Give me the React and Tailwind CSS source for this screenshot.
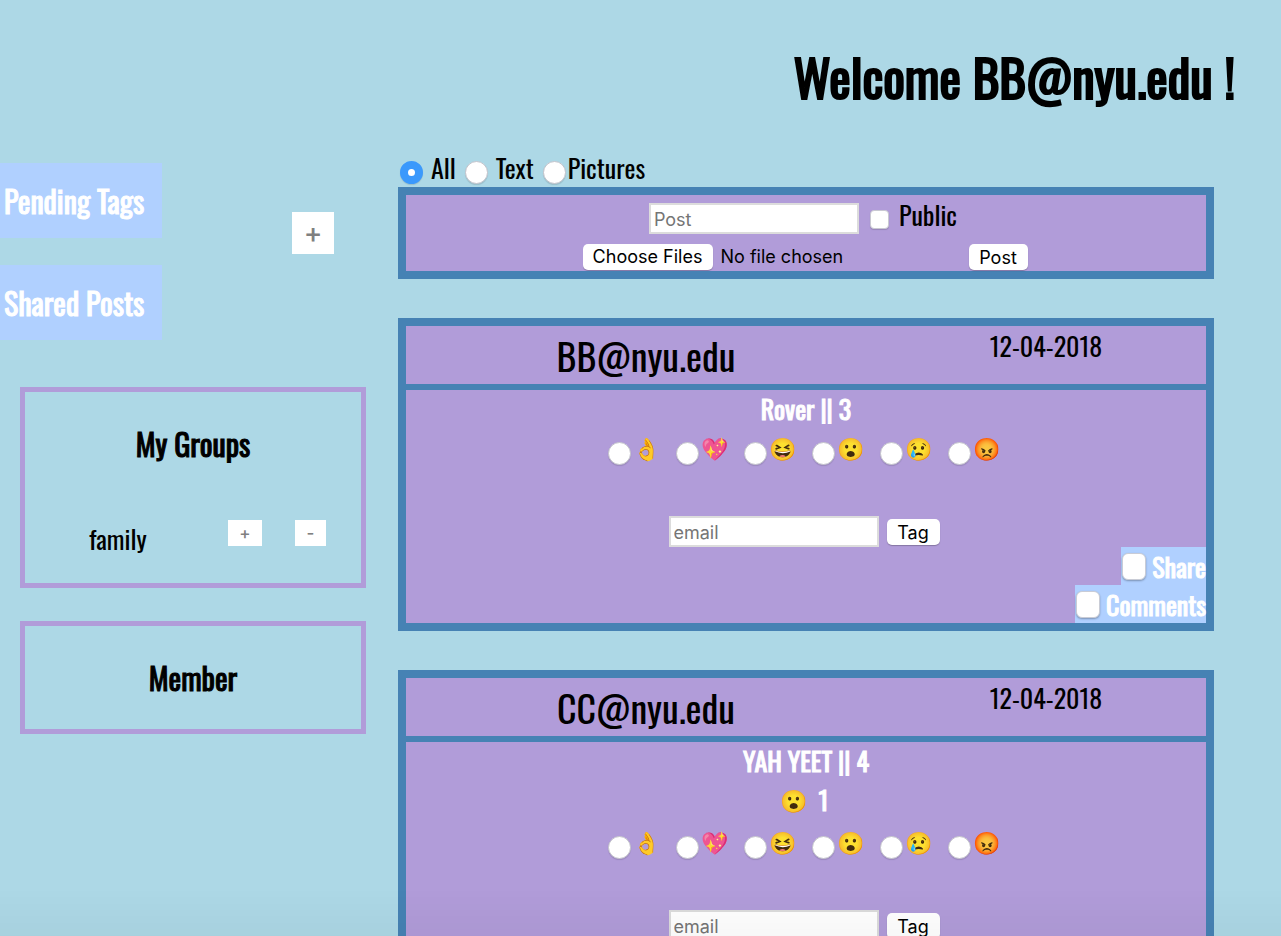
const REACTIONS = [
  ["ok", "👌"],
  ["love", "💖"],
  ["laugh", "😆"],
  ["wow", "😮"],
  ["sad", "😢"],
  ["angry", "😡"],
];

const POSTS = [
  { id: 3, author: "BB@nyu.edu", date: "12-04-2018", text: "Rover", counts: [] },
  { id: 4, author: "CC@nyu.edu", date: "12-04-2018", text: "YAH YEET", counts: [["😮", 1]] },
];

const FILTERS = [
  ["All", "gap-2"],
  ["Text", "gap-2"],
  ["Pictures", "gap-[2px]"],
];

function Radio({ className = "", ...props }) {
  return (
    <input
      type="radio"
      className={`size-[23px] shrink-0 appearance-none rounded-full border border-[#c4c4cc] bg-white shadow-[0_1px_1px_rgba(0,0,0,0.12)] checked:border-[8px] checked:border-[#3b99fc] ${className}`}
      {...props}
    />
  );
}

function TextBox(props) {
  return (
    <input
      type="text"
      className="h-[31px] w-[210px] border-2 border-[#dcdcdc] bg-white px-[3px] pt-[2px] font-['Inter',sans-serif] text-[18px] text-black placeholder:text-[#757575]"
      {...props}
    />
  );
}

function MacButton({ children, className = "", ...props }) {
  return (
    <button
      type="button"
      className={`h-[26px] rounded-[5px] bg-white font-['Inter',sans-serif] text-[18px] leading-[28px] text-black shadow-[0_1px_1px_rgba(0,0,0,0.25)] ${className}`}
      {...props}
    >
      {children}
    </button>
  );
}

function Toggle({ label }) {
  return (
    <label className="flex h-[38px] items-center gap-[6px] bg-[#b0d0ff] pl-px text-[26px] text-white [-webkit-text-stroke:1px]">
      <input
        type="checkbox"
        className="h-[27px] w-6 appearance-none rounded-[6px] border border-[#c9ccd6] bg-white shadow-[0_1px_2px_rgba(0,0,0,0.3)] checked:bg-[#3b99fc]"
      />
      {label}
    </label>
  );
}

function Post({ post }) {
  return (
    <article className="border-8 border-[#4682b4] bg-[#b19cd9]">
      <header className="flex h-16 border-b-[6px] border-[#4682b4]">
        <h2 className="w-3/5 pt-1 text-center text-[38px] leading-[50px]">{post.author}</h2>
        <p className="w-2/5 text-center text-[26px] leading-10">{post.date}</p>
      </header>
      <p className="text-center text-[26px] leading-[38px] text-white [-webkit-text-stroke:1px]">
        {post.text} || {post.id}
      </p>
      {post.counts.map(([emoji, count]) => (
        <p
          key={emoji}
          className="flex h-[42px] items-center justify-center gap-3 pr-1 pb-1 text-[26px] text-white [-webkit-text-stroke:1px]"
        >
          <span className="text-[22px] [-webkit-text-stroke:0]">{emoji}</span>
          {count}
        </p>
      ))}
      <form className="flex flex-col items-center" onSubmit={(e) => e.preventDefault()}>
        <fieldset className="flex h-10 items-center justify-center pr-1">
          {REACTIONS.map(([name, emoji]) => (
            <label key={name} className="flex w-[68px] items-center justify-center gap-[2px]">
              <Radio name={`reaction-${post.id}`} value={name} className="mt-[14px]" />
              <span className="flex w-7 justify-center text-[22px] leading-none">{emoji}</span>
            </label>
          ))}
        </fieldset>
        <div className="mt-12 flex items-center gap-2 pr-1">
          <TextBox placeholder="email" aria-label={`Email to tag on post ${post.id}`} />
          <MacButton className="w-[53px]">Tag</MacButton>
        </div>
      </form>
      <div className="flex flex-col items-end">
        <Toggle label="Share" />
        <Toggle label="Comments" />
      </div>
    </article>
  );
}

function SideLink({ children }) {
  return (
    <a
      href="#"
      className="flex h-[75px] items-center bg-[#b0d0ff] pr-[18px] pl-1 text-[30px] text-white [-webkit-text-stroke:1px]"
    >
      {children}
    </a>
  );
}

function SmallButton({ children, className = "", ...props }) {
  return (
    <button
      type="button"
      className={`h-[26px] bg-white font-['Inter',sans-serif] text-[17px] leading-[26px] font-medium text-[#808080] ${className}`}
      {...props}
    >
      {children}
    </button>
  );
}

function Panel({ title, className = "", children }) {
  return (
    <section className={`ml-5 border-[5px] border-[#b19cd9] pt-[30px] ${className}`}>
      <h2 className="text-center text-[30px] leading-[44px] [-webkit-text-stroke:1px]">{title}</h2>
      {children}
    </section>
  );
}

function Sidebar() {
  return (
    <aside className="w-[398px] shrink-0 pt-[13px] pr-8">
      <div className="flex items-start justify-between">
        <nav className="flex flex-col items-start gap-[27px]">
          <SideLink>Pending Tags</SideLink>
          <SideLink>Shared Posts</SideLink>
        </nav>
        <button
          type="button"
          aria-label="Add group"
          className="mt-[49px] mr-8 size-[42px] bg-white font-['Inter',sans-serif] text-[28px] leading-[42px] font-medium text-[#808080]"
        >
          +
        </button>
      </div>
      <Panel title="My Groups" className="mt-[47px] pb-[39px]">
        <div className="mt-[54px] flex h-6 items-start pr-[35px] pl-16">
          <span className="text-[26px] leading-[38px]">family</span>
          <SmallButton className="ml-auto w-[34px]" aria-label="Add member to family">
            +
          </SmallButton>
          <SmallButton className="ml-[33px] w-[31px]" aria-label="Remove member from family">
            -
          </SmallButton>
        </div>
      </Panel>
      <Panel title="Member" className="mt-[33px] pb-[29px]" />
    </aside>
  );
}

export default function App() {
  return (
    <div className="h-screen overflow-y-auto bg-[#add8e6] font-['Oswald',sans-serif] text-black [scrollbar-width:none]">
      <header className="flex h-[150px] items-center justify-end pt-[2px] pr-[46px]">
        <h1 className="text-[51px] [-webkit-text-stroke:2px]">Welcome BB@nyu.edu !</h1>
      </header>
      <div className="flex items-start">
        <Sidebar />
        <main className="min-w-0 flex-1 pr-[67px] pb-10">
          <div className="flex h-[34px] items-center gap-[9px] pl-[2px] text-[26px]">
            {FILTERS.map(([label, spacing], i) => (
              <label key={label} className={`flex items-center ${spacing}`}>
                <Radio name="filter" defaultChecked={i === 0} className="mt-[10px]" />
                {label}
              </label>
            ))}
          </div>
          <form
            className="mt-[3px] border-8 border-[#4682b4] bg-[#b19cd9]"
            onSubmit={(e) => e.preventDefault()}
          >
            <div className="flex h-[43px] items-center justify-center pt-1 pr-[6px]">
              <TextBox placeholder="Post" aria-label="Post text" />
              <label className="ml-[11px] flex items-center gap-[10px] pb-[9px] text-[26px]">
                <input
                  type="checkbox"
                  className="mt-[10px] size-[19px] appearance-none rounded border border-[#c9c9d2] bg-white shadow-[0_1px_1px_rgba(0,0,0,0.15)] checked:bg-[#3b99fc]"
                />
                Public
              </label>
            </div>
            <div className="flex items-start justify-center pt-[6px] pr-[2px]">
              <input
                type="file"
                multiple
                aria-label="Attach files"
                className="h-[27px] w-[386px] font-['Inter',sans-serif] text-[18px] leading-[26px] file:mr-2 file:h-[26px] file:w-[130px] file:rounded-[5px] file:bg-white file:text-[18px] file:leading-[26px] file:shadow-[0_1px_1px_rgba(0,0,0,0.25)]"
              />
              <MacButton className="w-[59px]">Post</MacButton>
            </div>
          </form>
          <div className="mt-[39px] flex flex-col gap-[39px]">
            {POSTS.map((post) => (
              <Post key={post.id} post={post} />
            ))}
          </div>
        </main>
      </div>
      <div className="pointer-events-none fixed inset-x-0 bottom-0 h-12 bg-linear-to-b from-transparent to-black/3" />
    </div>
  );
}
